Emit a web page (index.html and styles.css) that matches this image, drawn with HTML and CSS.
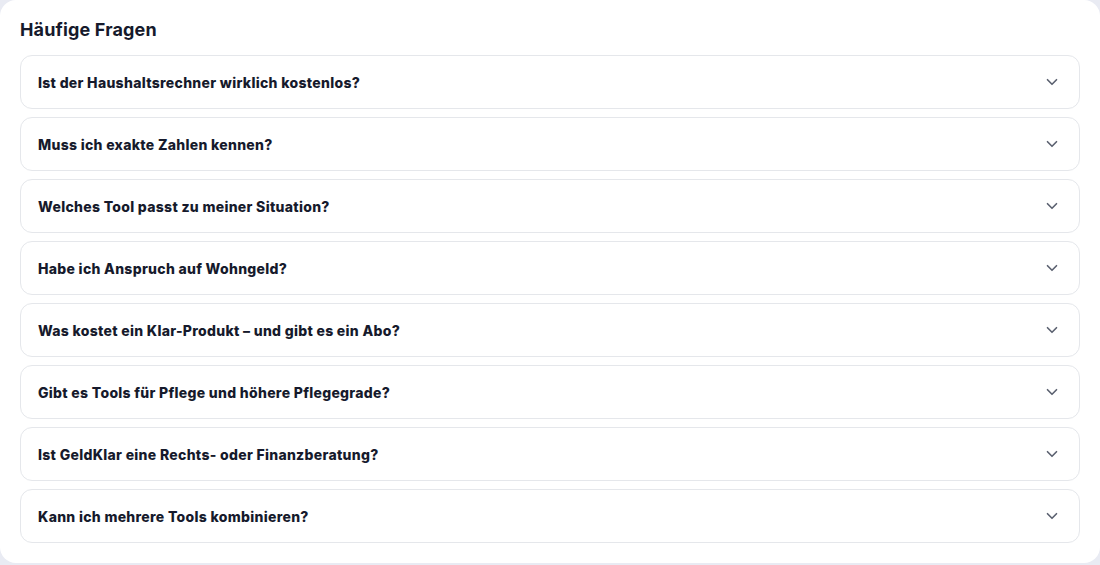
FILE: index.html
```html
<!DOCTYPE html>
<html lang="de">
<head>
<meta charset="utf-8">
<title>Häufige Fragen</title>
<link rel="stylesheet" href="styles.css">
</head>
<body>
<section class="card">
  <h2 class="title">Häufige Fragen</h2>
  <div class="faq">
    <details class="item"><summary class="q"><span>Ist der Haushaltsrechner wirklich kostenlos?</span><svg class="chev" viewBox="0 0 24 24"><path d="m6 9 6 6 6-6"/></svg></summary></details>
    <details class="item"><summary class="q"><span>Muss ich exakte Zahlen kennen?</span><svg class="chev" viewBox="0 0 24 24"><path d="m6 9 6 6 6-6"/></svg></summary></details>
    <details class="item"><summary class="q"><span>Welches Tool passt zu meiner Situation?</span><svg class="chev" viewBox="0 0 24 24"><path d="m6 9 6 6 6-6"/></svg></summary></details>
    <details class="item"><summary class="q"><span>Habe ich Anspruch auf Wohngeld?</span><svg class="chev" viewBox="0 0 24 24"><path d="m6 9 6 6 6-6"/></svg></summary></details>
    <details class="item"><summary class="q"><span>Was kostet ein Klar-Produkt – und gibt es ein Abo?</span><svg class="chev" viewBox="0 0 24 24"><path d="m6 9 6 6 6-6"/></svg></summary></details>
    <details class="item"><summary class="q"><span>Gibt es Tools für Pflege und höhere Pflegegrade?</span><svg class="chev" viewBox="0 0 24 24"><path d="m6 9 6 6 6-6"/></svg></summary></details>
    <details class="item"><summary class="q"><span>Ist GeldKlar eine Rechts- oder Finanzberatung?</span><svg class="chev" viewBox="0 0 24 24"><path d="m6 9 6 6 6-6"/></svg></summary></details>
    <details class="item"><summary class="q"><span>Kann ich mehrere Tools kombinieren?</span><svg class="chev" viewBox="0 0 24 24"><path d="m6 9 6 6 6-6"/></svg></summary></details>
  </div>
</section>
</body>
</html>
```

FILE: styles.css
```css
html, body {
  margin: 0;
  padding: 0;
  background: #e9ebf3;
  font-family: Inter, "Noto Sans", "Liberation Sans", sans-serif;
  color: #161a2c;
}

.card {
  background: #ffffff;
  border-radius: 16px;
  height: 563px;
  box-sizing: border-box;
  padding: 16px 20px 20px;
}

.title {
  margin: 0 0 11px;
  font-size: 18px;
  line-height: 28px;
  font-weight: 700;
  color: #161a2c;
  letter-spacing: 0.15px;
}

.faq {
  display: flex;
  flex-direction: column;
  gap: 8px;
}

.item {
  border: 1px solid #e5e7eb;
  border-radius: 12px;
  background: #ffffff;
}

.q {
  list-style: none;
  display: flex;
  align-items: center;
  justify-content: space-between;
  height: 52px;
  padding: 0 18px 0 17px;
  font-size: 14px;
  font-weight: 800;
  letter-spacing: 0.3px;
  color: #161a2c;
  cursor: pointer;
}

.q::-webkit-details-marker {
  display: none;
}

.chev {
  width: 18px;
  height: 18px;
  fill: none;
  stroke: #5b6170;
  stroke-width: 2.2;
  stroke-linecap: round;
  stroke-linejoin: round;
  flex-shrink: 0;
}
```
